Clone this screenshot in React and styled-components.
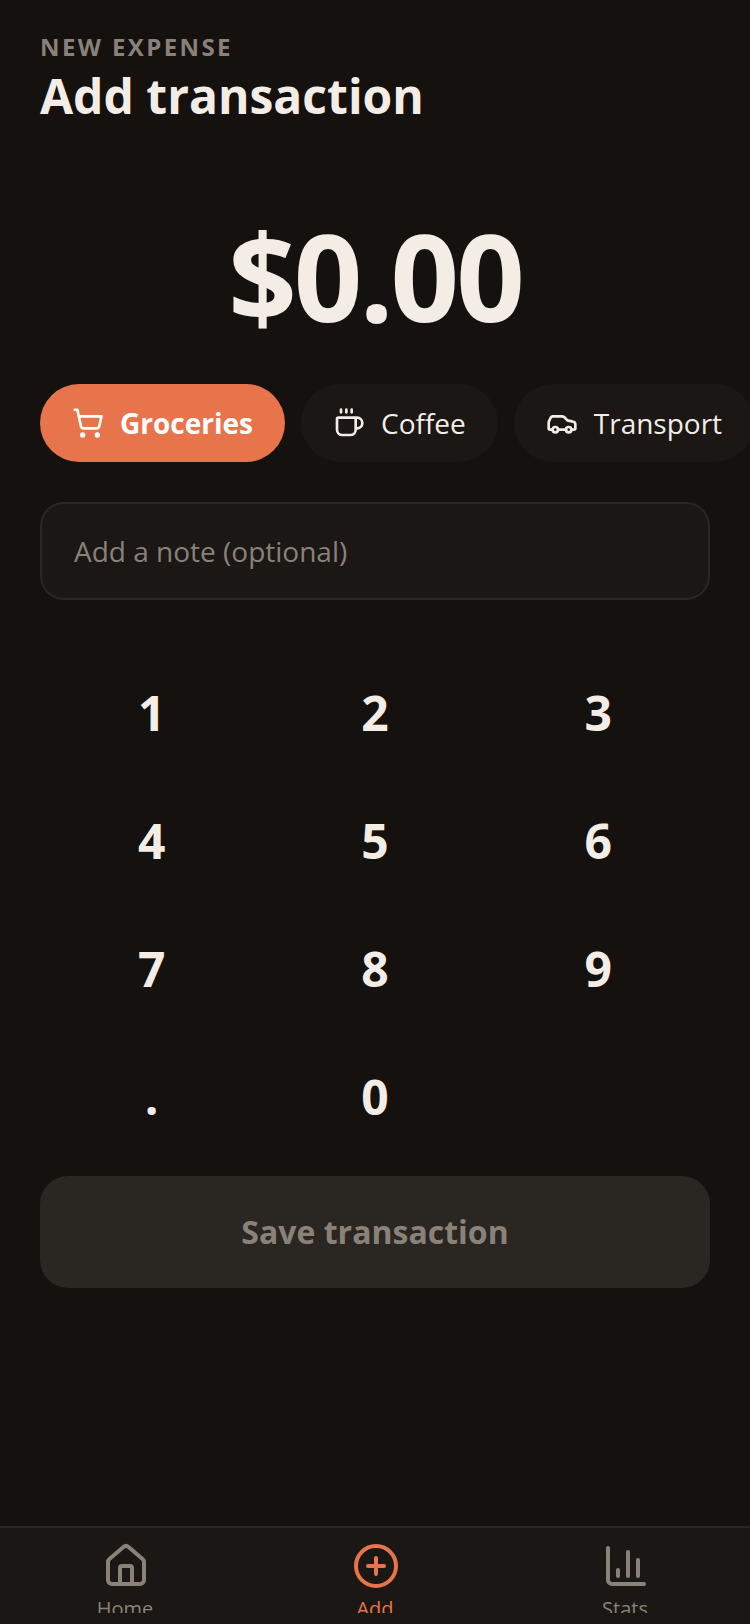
import styled, { createGlobalStyle } from 'styled-components';
import { ShoppingCart, Coffee, Car, House, CirclePlus, ChartColumn } from 'lucide-react';

const GlobalStyle = createGlobalStyle`
  html, body {
    margin: 0;
    padding: 0;
    background: #14110f;
  }
  * {
    box-sizing: border-box;
  }
`;

const Screen = styled.div`
  width: 750px;
  height: 1624px;
  display: flex;
  flex-direction: column;
  overflow: hidden;
  background: #14110f;
  color: #f4ede6;
  font-family: "Open Sans", sans-serif;
`;

const Main = styled.div`
  flex: 1;
  min-height: 0;
  padding: 32px 40px 0;
  display: flex;
  flex-direction: column;
`;

const Eyebrow = styled.div`
  font-size: 24px;
  line-height: 30px;
  margin-bottom: 2px;
  font-weight: 700;
  letter-spacing: 2.4px;
  color: #8a8279;
`;

const Title = styled.h1`
  margin: 0;
  font-size: 48px;
  line-height: 64px;
  font-weight: 700;
  color: #f4ede6;
`;

const Amount = styled.div`
  margin-top: 68px;
  text-align: center;
  font-size: 120px;
  line-height: 160px;
  font-weight: 700;
  letter-spacing: -3px;
`;

const Chips = styled.div`
  margin: 28px -40px 0 0;
  display: flex;
  gap: 16px;
  overflow: hidden;
`;

const Chip = styled.div`
  flex: none;
  height: 78px;
  padding: 0 32px;
  display: flex;
  align-items: center;
  gap: 16px;
  border-radius: 39px;
  background: ${props => (props.$active ? '#e8744c' : '#1a1714')};
  color: ${props => (props.$active ? '#ffffff' : '#f4ede6')};
  font-size: 28px;
  font-weight: ${props => (props.$active ? 700 : 400)};
`;

const NoteBox = styled.div`
  margin-top: 40px;
  height: 98px;
  padding: 0 32px;
  display: flex;
  align-items: center;
  border: 2px solid #2a2622;
  border-radius: 24px;
  background: #1a1714;
  color: #8a8279;
  font-size: 28px;
`;

const Keypad = styled.div`
  margin-top: 48px;
  display: grid;
  grid-template-columns: repeat(3, 1fr);
  grid-auto-rows: 128px;
`;

const Key = styled.div`
  display: flex;
  align-items: center;
  justify-content: center;
  font-size: 48px;
  font-weight: 700;
  color: #f4ede6;
`;

const SaveButton = styled.div`
  margin-top: 16px;
  height: 112px;
  padding-bottom: 2px;
  display: flex;
  align-items: center;
  justify-content: center;
  border-radius: 28px;
  background: #2a2622;
  color: #8a8279;
  font-size: 32px;
  font-weight: 700;
`;

const BottomNav = styled.nav`
  flex: none;
  height: 98px;
  display: grid;
  grid-template-columns: repeat(3, 1fr);
  border-top: 2px solid #2a2622;
  background: #1a1714;
  overflow: hidden;
`;

const NavItem = styled.div`
  height: 85px;
  padding-top: 14px;
  display: flex;
  flex-direction: column;
  align-items: center;
  gap: 5px;
  font-size: 20px;
  line-height: 28px;
  color: ${props => (props.$active ? '#e8744c' : '#8a8279')};
  overflow: hidden;

  svg {
    flex: none;
    margin-left: 2px;
  }
`;

const keys = ['1', '2', '3', '4', '5', '6', '7', '8', '9', '.', '0', ''];

const App = () => {
  return (
    <Screen>
      <GlobalStyle />
      <Main>
        <Eyebrow>NEW EXPENSE</Eyebrow>
        <Title>Add transaction</Title>
        <Amount>$0.00</Amount>
        <Chips>
          <Chip $active>
            <ShoppingCart size={32} strokeWidth={2} /> Groceries
          </Chip>
          <Chip>
            <Coffee size={32} strokeWidth={2} /> Coffee
          </Chip>
          <Chip>
            <Car size={32} strokeWidth={2} /> Transport
          </Chip>
        </Chips>
        <NoteBox>Add a note (optional)</NoteBox>
        <Keypad>
          {keys.map((k, i) => (
            <Key key={i}>{k}</Key>
          ))}
        </Keypad>
        <SaveButton>Save transaction</SaveButton>
      </Main>
      <BottomNav>
        <NavItem>
          <House size={48} strokeWidth={2} />
          Home
        </NavItem>
        <NavItem $active>
          <CirclePlus size={48} strokeWidth={2} />
          Add
        </NavItem>
        <NavItem>
          <ChartColumn size={48} strokeWidth={2} />
          Stats
        </NavItem>
      </BottomNav>
    </Screen>
  );
};

export default App;
